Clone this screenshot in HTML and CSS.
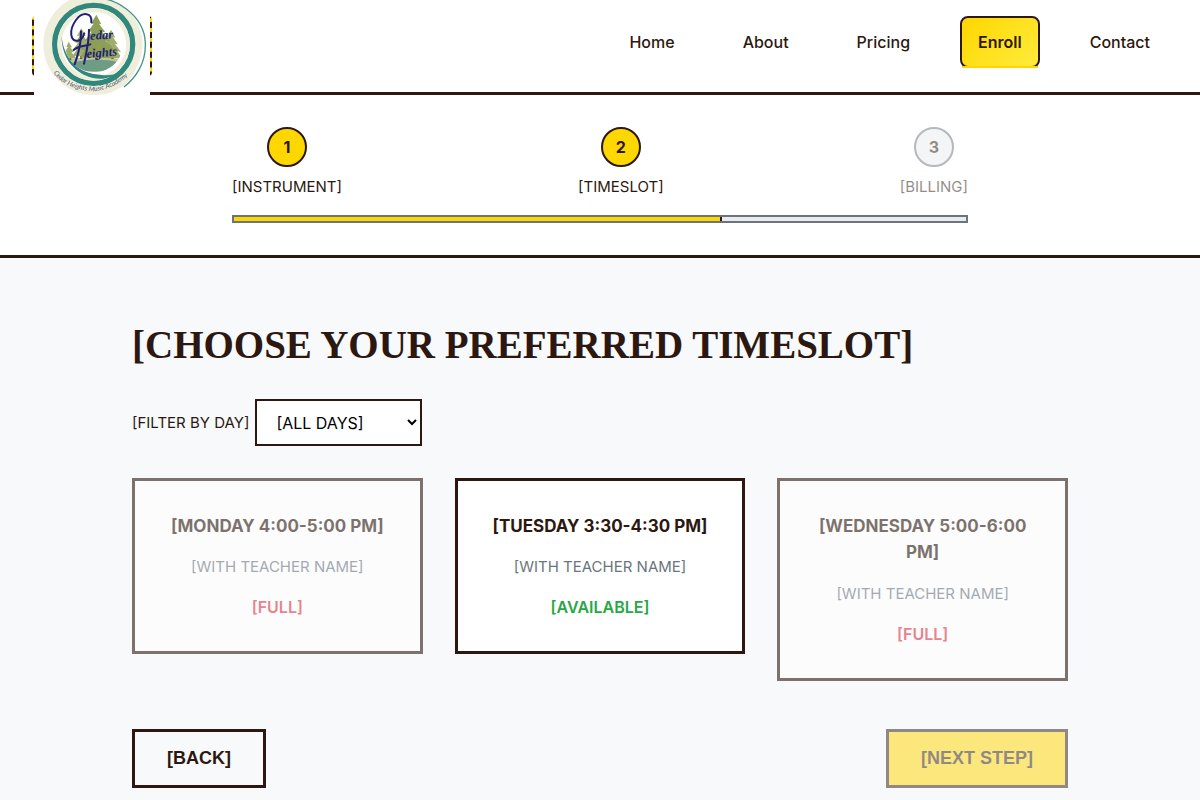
FILE: index.html
```html
<!DOCTYPE html>
<html lang="en">
<head>
<meta charset="utf-8">
<meta name="viewport" content="width=device-width, initial-scale=1">
<title>Enroll - Cedar Heights Music Academy</title>
<link rel="stylesheet" href="styles.css">
</head>
<body>
<header class="site-header">
  <a class="logo" href="#" aria-label="Cedar Heights Music Academy">
    <svg class="logo-art" viewBox="42 -36 348 348" aria-hidden="true">
      <defs>
        <path id="motto" d="M101 218 Q132 266 216 274 Q292 268 338 211"/>
        <clipPath id="disc"><circle cx="222" cy="129" r="88"/></clipPath>
      </defs>
      <rect x="42" y="-36" width="348" height="348" fill="#fff"/>
      <circle cx="222" cy="133" r="152" fill="#efeedb"/>
      <path d="M198 -22 C300 -34 372 45 376 122 C379 185 346 238 310 263 C345 222 370 177 367 121 C363 52 300 -12 198 -22Z" fill="#fff"/>
      <path d="M205 -4 C286 -17 374 49 376 130 C378 190 346 235 312 261" fill="none" stroke="#429688" stroke-width="4"/>
      <circle cx="221" cy="133" r="117" fill="#fff" stroke="#30877c" stroke-width="16"/>
      <circle cx="221" cy="133" r="103" fill="none" stroke="#efeedb" stroke-width="12"/>
      <path d="M125 108 C123 186 182 239 248 236 C280 233 306 217 320 196 C300 224 270 229 240 224 C175 221 131 177 125 108Z" fill="#30877c"/>
      <g clip-path="url(#disc)">
        <path d="M135 178 Q215 166 305 176 L290 215 H155Z" fill="#bdc49a"/>
        <path d="M150 190 Q222 168 302 187 Q272 219 214 214 Q174 215 150 190Z" fill="#6f9c85"/>
        <path fill="#755b32" d="M148 160h6v20h-6zM180 155h7v22h-7zM225 150h9v30h-9zM274 158h7v19h-7z"/>
        <g fill="#9ead69">
          <path d="M146 125 156 142 151 142 162 157 154 156 168 175H129L139 156H134L144 141H139Z"/>
          <path d="M184 85 197 108 190 107 205 129 197 128 215 151 202 149 216 169H157L170 149H160L174 128H166L179 107H171Z"/>
          <path d="M273 89 286 113 279 112 293 133 285 132 303 156 292 154 306 174H240L254 153H247L262 132H255L266 112H260Z"/>
          <path fill="#8d9f56" d="M229 44 244 73 237 71 256 97 246 95 271 124 256 122 286 151 267 149 287 173H180L195 149H181L205 122H194L215 95H203L221 71H213Z"/>
        </g>
      </g>
      <path class="logo-flourish" d="M214 67 C218 36 187 35 168 60 C146 90 150 126 174 122 C184 120 190 110 193 100"/>
      <path class="logo-flourish" d="M183 94 C184 127 175 163 164 193 M207 89 C207 126 199 160 192 191 M161 150 C174 137 196 139 211 133"/>
      <g class="logo-name">
        <text x="211" y="120" transform="rotate(-4 211 120)">edar</text>
        <text x="200" y="174" transform="rotate(-5 200 174)">eights</text>
      </g>
      <text class="logo-motto"><textPath href="#motto">Cedar Heights Music Academy</textPath></text>
    </svg>
  </a>
  <nav class="site-nav" aria-label="Main">
    <a class="nav-link" href="#">Home</a>
    <a class="nav-link" href="#">About</a>
    <a class="nav-link" href="#">Pricing</a>
    <a class="nav-link nav-link-active" href="#" aria-current="page">Enroll</a>
    <a class="nav-link" href="#">Contact</a>
  </nav>
</header>
<section class="progress" aria-label="Enrollment progress">
  <div class="progress-inner">
    <ol class="steps">
      <li class="step"><span class="step-number">1</span><span>[INSTRUMENT]</span></li>
      <li class="step" aria-current="step"><span class="step-number">2</span><span>[TIMESLOT]</span></li>
      <li class="step step-pending"><span class="step-number">3</span><span>[BILLING]</span></li>
    </ol>
    <div class="bar"><div class="bar-fill" style="width: 66.67%"></div></div>
  </div>
</section>
<main class="content">
  <h1 class="title">[CHOOSE YOUR PREFERRED TIMESLOT]</h1>
  <div class="filter">
    <label for="day">[FILTER BY DAY]</label>
    <select class="day-select" id="day">
      <option>[ALL DAYS]</option>
      <option>[MONDAY]</option>
      <option>[TUESDAY]</option>
      <option>[WEDNESDAY]</option>
    </select>
  </div>
  <div class="slots">
    <article class="slot slot-full">
      <h2 class="slot-time">[MONDAY 4:00-5:00 PM]</h2>
      <p class="slot-teacher">[WITH TEACHER NAME]</p>
      <p class="slot-status">[FULL]</p>
    </article>
    <article class="slot">
      <h2 class="slot-time">[TUESDAY 3:30-4:30 PM]</h2>
      <p class="slot-teacher">[WITH TEACHER NAME]</p>
      <p class="slot-status">[AVAILABLE]</p>
    </article>
    <article class="slot slot-full">
      <h2 class="slot-time">[WEDNESDAY 5:00-6:00 PM]</h2>
      <p class="slot-teacher">[WITH TEACHER NAME]</p>
      <p class="slot-status">[FULL]</p>
    </article>
  </div>
  <div class="actions">
    <button class="button" type="button">[BACK]</button>
    <button class="button button-next" type="button" disabled>[NEXT STEP]</button>
  </div>
</main>
</body>
</html>
```
FILE: styles.css
```css
:root {
  --brown: #2c1810;
  --gold: #ffd700;
  --gray: #6c757d;
  --pale: #f8f9fb;
}
* { box-sizing: border-box; }
body {
  margin: 0;
  background: var(--pale);
  color: var(--brown);
  font: 400 15px/24px Inter, "Liberation Sans", sans-serif;
}
.site-header {
  display: flex;
  justify-content: space-between;
  align-items: flex-start;
  padding: 16px 32px;
  background: #fff;
  border-bottom: 3px solid var(--brown);
}
.logo {
  position: relative;
  flex: none;
  width: 120px;
  height: 60px;
  border: 2px dashed var(--brown);
  border-radius: 4px;
  background: var(--gold) border-box;
}
.logo-art {
  position: absolute;
  top: -30px;
  left: 0;
  width: 116px;
  height: 116px;
}
.logo-flourish { fill: none; stroke: #202078; stroke-width: 6; stroke-linecap: round; }
.logo-name { fill: #202078; font: italic 700 38px "Liberation Serif", serif; }
.logo-motto { fill: #4f5771; font: italic 20px Lato, sans-serif; }
.site-nav { display: flex; gap: 32px; font-size: 16px; }
.nav-link {
  position: relative;
  padding: 12px 16px;
  border: 2px solid transparent;
  border-radius: 8px;
  color: var(--brown);
  font-weight: 500;
  text-decoration: none;
}
.nav-link-active {
  border-color: var(--brown);
  background: linear-gradient(135deg, var(--gold), #ffeb3b) padding-box;
  font-weight: 600;
}
.nav-link-active::after {
  content: "";
  position: absolute;
  right: 0;
  bottom: -2px;
  left: 0;
  height: 2px;
  background: var(--gold);
}
.progress { padding: 32px; background: #fff; border-bottom: 3px solid var(--brown); }
.progress-inner { max-width: 736px; margin: 0 auto; }
.steps {
  display: flex;
  justify-content: space-between;
  margin: 0 0 16px;
  padding: 0;
  list-style: none;
}
.step { display: flex; flex-direction: column; align-items: center; gap: 8px; }
.step-number {
  display: grid;
  place-items: center;
  width: 40px;
  height: 40px;
  border: 2px solid var(--brown);
  border-radius: 50%;
  background: var(--gold);
  font-size: 16px;
  font-weight: 700;
}
.step-pending { opacity: .5; }
.step-pending .step-number { border-color: var(--gray); background: #e9ecef; }
.bar { height: 8px; border: 2px solid var(--gray); background: #e9ecef; }
.bar-fill { height: 100%; border-right: 2px solid var(--brown); background: var(--gold); }
.content { max-width: 1000px; margin: 0 auto; padding: 64px 32px; }
.title {
  margin: 0 0 32px;
  font: 700 39px/45px "Liberation Serif", serif;
}
.filter { display: flex; align-items: center; gap: 6px; margin-bottom: 32px; }
.day-select {
  width: 167px;
  height: 47px;
  padding: 8px 15px;
  border: 2px solid var(--brown);
  border-radius: 0;
  background: #fff;
  color: #000;
  font: inherit;
  font-size: 16px;
}
.slots {
  display: grid;
  grid-template-columns: repeat(3, 1fr);
  align-items: start;
  gap: 32px;
  margin-bottom: 48px;
}
.slot {
  display: grid;
  gap: 16px;
  padding: 32px;
  border: 3px solid var(--brown);
  background: #fff;
  text-align: center;
}
.slot-full { opacity: .6; }
.slot-time { margin: 0; font-size: 17px; font-weight: 700; line-height: 1.55; }
.slot-teacher { margin: 0; color: var(--gray); }
.slot-status { margin: 0; color: #28a745; font-size: 16px; font-weight: 600; }
.slot-full .slot-status { color: #dc3545; }
.actions { display: flex; justify-content: space-between; }
.button {
  padding: 16px 32px;
  border: 3px solid var(--brown);
  background: transparent;
  color: var(--brown);
  font: 700 18px/21px "Liberation Sans", sans-serif;
}
.button-next { background: var(--gold); opacity: .5; }
```
